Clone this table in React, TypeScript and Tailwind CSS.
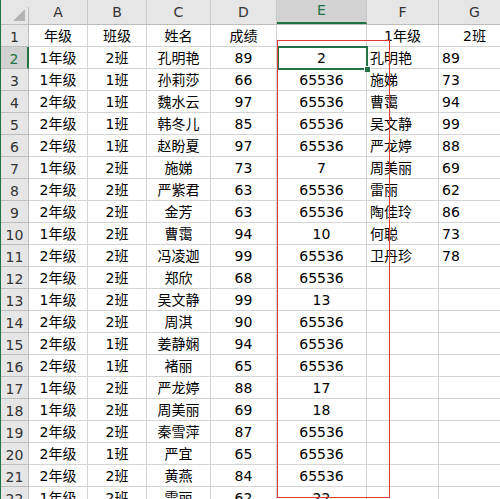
import React from 'react';

const font = { fontFamily: '"DejaVu Sans", "Noto Sans CJK SC", sans-serif' };

// column widths + alignment, written out in full so tailwind picks them up
const cols = [
  { key: 'A', w: 'w-[59px]', align: 'justify-center' },
  { key: 'B', w: 'w-[59px]', align: 'justify-center' },
  { key: 'C', w: 'w-[64px]', align: 'justify-center' },
  { key: 'D', w: 'w-[66px]', align: 'justify-center' },
  { key: 'E', w: 'w-[90px]', align: 'justify-center' },
  { key: 'F', w: 'w-[72px]', align: 'justify-start pl-[3px]' },
  { key: 'G', w: 'w-[72px]', align: 'justify-start pl-[3px]' },
];

const rows: string[][] = [
  ['年级', '班级', '姓名', '成绩', '', '1年级', '2班'],
  ['1年级', '2班', '孔明艳', '89', '2', '孔明艳', '89'],
  ['1年级', '1班', '孙莉莎', '66', '65536', '施娣', '73'],
  ['2年级', '1班', '魏水云', '97', '65536', '曹霭', '94'],
  ['2年级', '1班', '韩冬儿', '85', '65536', '吴文静', '99'],
  ['2年级', '1班', '赵盼夏', '97', '65536', '严龙婷', '88'],
  ['1年级', '2班', '施娣', '73', '7', '周美丽', '69'],
  ['2年级', '2班', '严紫君', '63', '65536', '雷丽', '62'],
  ['2年级', '2班', '金芳', '63', '65536', '陶佳玲', '86'],
  ['1年级', '2班', '曹霭', '94', '10', '何聪', '73'],
  ['2年级', '2班', '冯凌迦', '99', '65536', '卫丹珍', '78'],
  ['2年级', '2班', '郑欣', '68', '65536', '', ''],
  ['1年级', '2班', '吴文静', '99', '13', '', ''],
  ['2年级', '2班', '周淇', '90', '65536', '', ''],
  ['2年级', '1班', '姜静娴', '94', '65536', '', ''],
  ['2年级', '1班', '褚丽', '65', '65536', '', ''],
  ['1年级', '2班', '严龙婷', '88', '17', '', ''],
  ['1年级', '2班', '周美丽', '69', '18', '', ''],
  ['2年级', '2班', '秦雪萍', '87', '65536', '', ''],
  ['2年级', '1班', '严宜', '65', '65536', '', ''],
  ['2年级', '2班', '黄燕', '84', '65536', '', ''],
  ['1年级', '2班', '雷丽', '62', '22', '', ''],
];

const HeaderRow = () => (
  <div className="flex h-[25px] bg-[#e6e6e6] border-b border-[#bdbdbd]">
    <div className="w-[28px] shrink-0 relative border-r border-[#bdbdbd] mt-[7px]">
      <svg className="absolute right-[3px] bottom-[3px]" width="12" height="12" viewBox="0 0 12 12">
        <polygon points="12,0 12,12 0,12" fill="#b4b4b4" />
      </svg>
    </div>
    {cols.map((c) => {
      const sel = c.key === 'E';
      return (
        <div
          key={c.key}
          className={
            c.w +
            ' shrink-0 flex items-end justify-center pb-[1px] text-[14px] border-r border-[#c8c8c8] ' +
            (sel ? 'bg-[#d2d2d2] text-[#217346] border-b-2 border-b-[#217346]' : 'text-[#333]')
          }
        >
          {c.key}
        </div>
      );
    })}
  </div>
);

const DataRow = ({ n, cells }: { n: number; cells: string[] }) => {
  const selRow = n === 2;
  return (
    <div className="flex h-[22px]">
      <div
        className={
          'w-[28px] shrink-0 flex items-center justify-center pt-[3px] text-[14px] border-b border-[#bdbdbd] ' +
          (selRow
            ? 'bg-[#d2d2d2] text-[#217346] border-r-2 border-r-[#217346]'
            : 'bg-[#e6e6e6] text-[#333] border-r border-r-[#bdbdbd]')
        }
      >
        {n}
      </div>
      {cols.map((c, i) => (
        <div
          key={c.key}
          className={
            c.w +
            ' shrink-0 flex items-center pt-[1px] text-[14px] text-black bg-white border-r border-b border-[#d4d4d4] whitespace-nowrap ' +
            // the header row of the lookup table on the right is centred
            (n === 1 ? 'justify-center' : c.align)
          }
        >
          {cells[i]}
        </div>
      ))}
    </div>
  );
};

export default function App() {
  return (
    <div className="w-[500px] h-[499px] overflow-hidden bg-white relative border-l border-[#217346]" style={font}>
      <HeaderRow />
      {rows.map((r, i) => (
        <DataRow key={i} n={i + 1} cells={r} />
      ))}

      {/* active cell E2 */}
      <div className="absolute left-[276px] top-[46px] w-[91px] h-[24px] border-2 border-[#217346] pointer-events-none" />
      <div className="absolute left-[363px] top-[66px] w-[7px] h-[7px] bg-[#217346] border border-white pointer-events-none" />

      {/* red annotation box */}
      <div className="absolute left-[276px] top-[40px] w-[113px] h-[458px] border border-[#e53935] pointer-events-none" />
    </div>
  );
}
